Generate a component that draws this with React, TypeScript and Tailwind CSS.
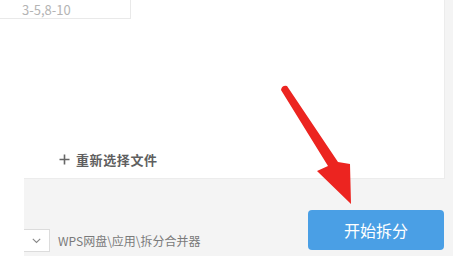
import React from "react";

export default function App() {
  const font = { fontFamily: '"Noto Sans CJK SC", "Noto Sans", sans-serif' };
  return (
    <div className="relative w-[453px] h-[256px] overflow-hidden bg-white flex flex-col" style={font}>
      {/* top area */}
      <div className="flex h-[179px] shrink-0">
        <div className="w-[24px] h-full bg-white" />
        <div className="w-[421px] h-full bg-white border-b border-r border-[#ececec] flex flex-col">
          <div className="-ml-[24px] w-[131px] h-[20px] -mt-px border border-l-0 border-[#e9e9e9] flex items-center pl-[22px] text-[13px] leading-none text-[#b4b4b4]">
            3-5,8-10
          </div>
          <div className="mt-[134px] ml-[35px] flex items-center gap-[6px] text-[#5f5f5f]">
            <svg width="11" height="11" viewBox="0 0 11 11">
              <path d="M5.5 0.5V10.5M0.5 5.5H10.5" stroke="#666" strokeWidth="1.6" />
            </svg>
            <span className="text-[13px] font-bold leading-none tracking-[0.6px]">重新选择文件</span>
          </div>
        </div>
        <div className="flex-1 bg-[#f4f4f4]" />
      </div>
      {/* bottom area */}
      <div className="flex flex-1">
        <div className="w-[24px] bg-white" />
        <div className="flex-1 bg-[#f4f4f4] flex items-end pb-[4px]">
          <div className="flex items-center">
            <div className="w-[26px] h-[23px] bg-white border border-l-0 border-[#dcdcdc] flex items-center justify-center">
              <svg width="9" height="6" viewBox="0 0 9 6">
                <path d="M0.8 0.8L4.5 4.5L8.2 0.8" stroke="#888" strokeWidth="1.1" fill="none" />
              </svg>
            </div>
            <span className="ml-[8px] text-[12px] leading-none text-[#7a7a7a]">WPS网盘\应用\拆分合并器</span>
          </div>
          <div className="ml-auto mr-[9px] mb-[2px] w-[136px] h-[40px] rounded-[4px] bg-[#4a9fe5] flex items-center justify-center text-white text-[16px] leading-none">
            开始拆分
          </div>
        </div>
      </div>
      {/* red arrow overlay */}
      <svg className="absolute left-0 top-0 pointer-events-none" width="453" height="256" viewBox="0 0 453 256">
        <path
          d="M281 90 Q282 85 287 86 L338 162 L350 164 L351 204 L317 171 L328 166 Z"
          fill="#ec2420"
          strokeLinejoin="round"
        />
      </svg>
    </div>
  );
}
